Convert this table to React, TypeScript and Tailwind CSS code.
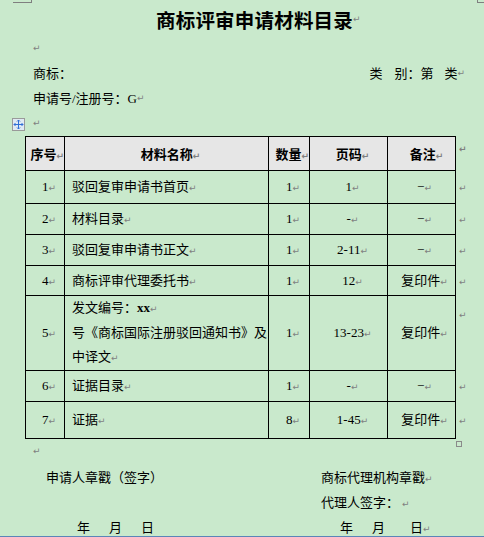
import React from "react";

const M = ({ className = "" }: { className?: string }) => (
  <span className={`font-['DejaVu_Sans'] text-[9px] text-[#7f7f7f] ${className}`}>↵</span>
);

const rows = [
  { n: "1", name: "驳回复审申请书首页", q: "1", p: "1", r: "−", h: "h-[33px]" },
  { n: "2", name: "材料目录", q: "1", p: "-", r: "−", h: "h-[31px]" },
  { n: "3", name: "驳回复审申请书正文", q: "1", p: "2-11", r: "−", h: "h-[31px]" },
  { n: "4", name: "商标评审代理委托书", q: "1", p: "12", r: "复印件", h: "h-[30px]" },
];

const rowsAfter = [
  { n: "6", name: "证据目录", q: "1", p: "-", r: "−", h: "h-[31px]" },
  { n: "7", name: "证据", q: "8", p: "1-45", r: "复印件", h: "h-[37px]" },
];

function Row({ n, name, q, p, r, h }: { n: string; name: string; q: string; p: string; r: string; h: string }) {
  return (
    <tr className={h}>
      <td className="border border-black pr-[8px] text-right">
        {n}
        <M />
      </td>
      <td className="border border-black pl-[7px]">
        {name}
        <M />
      </td>
      <td className="border border-black pr-[9px] text-right">
        {q}
        <M />
      </td>
      <td className="border border-black pl-[8px] text-center">
        {p}
        <M />
      </td>
      <td className="border border-black pl-[6px] text-center">
        {r}
        <M />
      </td>
      <td className="pl-[3px]">
        <M />
      </td>
    </tr>
  );
}

function MoveHandle() {
  return (
    <div className="flex h-[13px] w-[13px] items-center justify-center border border-[#9a9a9a] bg-[#dfe9f3]">
      <svg width="11" height="11" viewBox="0 0 11 11" fill="none" stroke="#2f6fd6" strokeWidth="1">
        <path d="M5.5 1v9M1 5.5h9" />
        <path d="M4 2.5l1.5-1.5 1.5 1.5M4 8.5l1.5 1.5 1.5-1.5M2.5 4L1 5.5 2.5 7M8.5 4l1.5 1.5L8.5 7" />
      </svg>
    </div>
  );
}

export default function App() {
  return (
    <div className="relative h-[537px] w-[484px] overflow-hidden border-b border-[#5a86b8] bg-[#c9e9cc] font-['Liberation_Serif','Noto_Sans_CJK_SC',serif] text-[13px] text-black">
      {/* page corner marks */}
      <div className="absolute left-[13px] top-0 h-[3px] w-[19px] border-b border-r border-[#7f7f7f]" />
      <div className="absolute left-[477px] top-0 h-[3px] w-[8px] border-b border-l border-[#7f7f7f]" />

      {/* title */}
      <div className="flex h-[36px] items-center pl-[156px] pt-[4px]">
        <span className="text-[19.5px] font-bold tracking-[0.2px] font-['Noto_Sans_CJK_SC',serif]">商标评审申请材料目录</span>
        <M />
      </div>

      <div className="flex h-[25px] items-center pl-[33px]">
        <M />
      </div>

      <div className="flex h-[25px] items-center pl-[33px]">
        <span>商标：</span>
        <div className="ml-auto mr-[19px] flex items-center">
          <span>类</span>
          <span className="ml-[12px]">别：第</span>
          <span className="ml-[11px]">类</span>
          <M />
        </div>
      </div>

      <div className="flex h-[25px] items-center pl-[33px]">
        <span>申请号/注册号：G</span>
        <M />
      </div>

      <div className="flex h-[25px] items-center pl-[12px]">
        <div className="mt-[2px]">
          <MoveHandle />
        </div>
        <M className="ml-[8px]" />
      </div>

      {/* table */}
      <div className="relative pl-[25px]">
        <table className="table-fixed border-collapse">
          <colgroup>
            <col className="w-[39px]" />
            <col className="w-[204px]" />
            <col className="w-[41px]" />
            <col className="w-[78px]" />
            <col className="w-[68px]" />
            <col className="w-[14px]" />
          </colgroup>
          <tbody>
            <tr className="h-[34px] font-['Noto_Sans_CJK_SC',serif] font-bold">
              <td className="border border-black bg-[#e6e6e6] text-right">
                序号
                <M />
              </td>
              <td className="border border-black bg-[#e6e6e6] pl-[8px] text-center">
                材料名称
                <M />
              </td>
              <td className="border border-black bg-[#e6e6e6] text-right">
                数量
                <M />
              </td>
              <td className="border border-black bg-[#e6e6e6] pl-[8px] text-center">
                页码
                <M />
              </td>
              <td className="border border-black bg-[#e6e6e6] pl-[10px] text-center">
                备注
                <M />
              </td>
              <td className="pl-[3px] align-top">
                <M />
              </td>
            </tr>
            {rows.map((r) => (
              <Row key={r.n} {...r} />
            ))}
            <tr className="h-[75px]">
              <td className="border border-black pr-[8px] text-right">
                5
                <M />
              </td>
              <td className="border border-black pl-[7px] leading-[24px]">
                <div>
                  发文编号：<span className="font-bold">xx</span>
                  <M />
                </div>
                <div className="whitespace-nowrap">号《商标国际注册驳回通知书》及</div>
                <div>
                  中译文
                  <M />
                </div>
              </td>
              <td className="border border-black pr-[9px] text-right">
                1
                <M />
              </td>
              <td className="border border-black pl-[8px] text-center">
                13-23
                <M />
              </td>
              <td className="border border-black pl-[6px] text-center">
                复印件
                <M />
              </td>
              <td className="pl-[3px] pt-[8px] align-top">
                <M />
              </td>
            </tr>
            {rowsAfter.map((r) => (
              <Row key={r.n} {...r} />
            ))}
          </tbody>
        </table>
        <div className="absolute left-[456px] top-[100%] mt-[2px] h-[6px] w-[6px] border border-[#8a8a8a]" />
      </div>

      <div className="flex h-[26px] items-center pl-[33px]">
        <M />
      </div>

      {/* signatures */}
      <div className="grid h-[25px] grid-cols-[321px_1fr] items-center">
        <div className="pl-[46px]">申请人章戳（签字）</div>
        <div>
          商标代理机构章戳
          <M />
        </div>
      </div>
      <div className="grid h-[25px] grid-cols-[321px_1fr] items-center">
        <div />
        <div>
          代理人签字：
          <M className="ml-[3px]" />
        </div>
      </div>
      <div className="grid h-[25px] grid-cols-[321px_1fr] items-center">
        <div className="pl-[77px]">
          <span>年</span>
          <span className="ml-[19px]">月</span>
          <span className="ml-[19px]">日</span>
        </div>
        <div className="pl-[19px]">
          <span>年</span>
          <span className="ml-[19px]">月</span>
          <span className="ml-[25px]">日</span>
          <M />
        </div>
      </div>
    </div>
  );
}
